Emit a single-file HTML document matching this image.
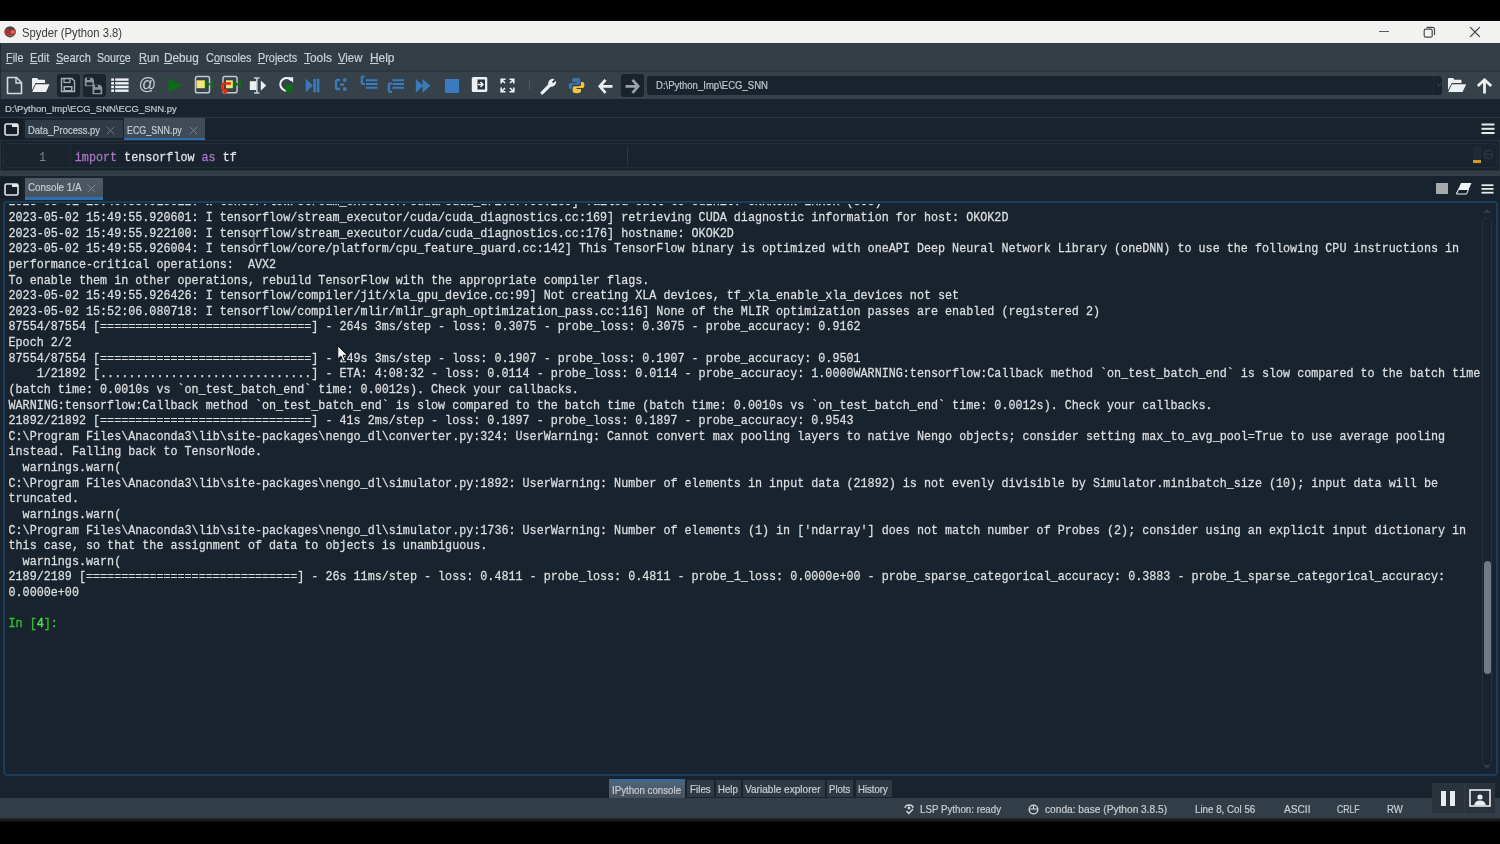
<!DOCTYPE html>
<html><head><meta charset="utf-8"><style>*{margin:0;padding:0;box-sizing:border-box}
html,body{width:1500px;height:844px;overflow:hidden;background:#000}
body{position:relative;font-family:"Liberation Sans",sans-serif}
.a{position:absolute}
.t{position:absolute;white-space:pre;line-height:1;transform-origin:0 0}
.t u{text-decoration:underline;text-underline-offset:1px;text-decoration-thickness:1px}
#title{left:0;top:21px;width:1500px;height:22px;background:#f2f2f1}
#menubar{left:0;top:43px;width:1500px;height:27px;background:#323d46}
#tbsep{left:0;top:70px;width:1500px;height:2px;background:#2b363f}
#toolbar{left:0;top:72px;width:1500px;height:27px;background:#36414a}
#main{left:0;top:99px;width:1500px;height:699px;background:#19232d}
#status{left:0;top:798px;width:1500px;height:20px;background:#323e47}
#stline{left:0;top:818px;width:1500px;height:5px;background:linear-gradient(#2a2a2a,#000)}
#pathline{left:0;top:117px;width:1500px;height:1px;background:#2c3741}
#tab1{left:24.7px;top:120px;width:98px;height:18px;background:#2e3a44}
#tab2{left:124px;top:118px;width:81px;height:22.7px;background:#3f4b56;border-bottom:3px solid #2b6fae}
#edouter{left:0;top:140px;width:1500px;height:31px;background:#19232d;border:1px solid #26313b}
#edinner{left:3px;top:143px;width:1494px;height:25px;border:1px solid #222d37;border-radius:4px;background:#19232d}
#gutter{left:4px;top:144px;width:67px;height:23px;background:#1a242d;border-right:1px solid #1f2a33}
#splitter{left:0;top:171px;width:1500px;height:5.3px;background:#323d46}
#ctab{left:25px;top:178px;width:77.5px;height:21.5px;background:linear-gradient(#4f5963,#46525d);border-bottom:3px solid #2b6fae}
#conpanel{left:2.5px;top:200.8px;width:1495px;height:575.5px;border:2px solid #1a3d5c;border-radius:4px}
#vscroll{left:1482px;top:218px;width:10px;height:548px;border:1px solid #27323c;border-radius:5px}
#vthumb{left:1484px;top:561px;width:7px;height:113px;background:#6f7a82;border-radius:4px}
.btab{position:absolute;top:780.3px;height:16.5px;background:#2d3943}
#btab0{background:linear-gradient(#506476,#44525d);border-top:2.5px solid #2e6aa3;top:778.8px;height:19.2px}
.cl{position:absolute;left:8.5px;font-family:"Liberation Mono",monospace;font-size:11.74px;line-height:15.62px;height:15.62px;color:#dcdee0;white-space:pre;transform:scaleY(1.1);transform-origin:0 50%;-webkit-text-stroke:0.25px #dcdee0}
.prompt{color:#33c233;-webkit-text-stroke:0.3px #33c233}
.prompt b{font-weight:normal;color:#4ae84a;-webkit-text-stroke:0.35px #4ae84a}
#consoleclip{left:5px;top:203.5px;width:1475px;height:570px;overflow:hidden}
</style></head><body><div id="root" style="position:absolute;left:0;top:0;width:1500px;height:844px;overflow:hidden;filter:blur(0.4px)"><div class="a" id="title"></div>
<div class="a" id="menubar"></div>
<div class="a" id="tbsep"></div>
<div class="a" id="toolbar"></div>
<div class="a" id="main"></div>
<div class="a" id="status"></div>
<div class="a" id="stline"></div>
<div class="a" id="pathline"></div>
<div class="a" id="tab1"></div>
<div class="a" id="tab2"></div>
<div class="a" id="edouter"></div>
<div class="a" id="edinner"></div>
<div class="a" id="gutter"></div>
<div class="a" id="splitter"></div>
<div class="a" id="ctab"></div>
<div class="a" id="conpanel"></div>
<div class="a" id="vscroll"></div>
<div class="a" id="vthumb"></div>
<div class="btab" id="btab0" style="left:609px;width:76px"></div>
<div class="btab" style="left:687px;width:26.5px"></div>
<div class="btab" style="left:715.5px;width:25px"></div>
<div class="btab" style="left:742.5px;width:82px"></div>
<div class="btab" style="left:826.7px;width:26.6px"></div>
<div class="btab" style="left:855.5px;width:36.3px"></div>
<!-- title logo -->
<svg class="a" style="left:3.5px;top:25.5px" width="12.5" height="12" viewBox="0 0 12.5 12">
<circle cx="6.1" cy="5.8" r="5.6" fill="#4a4444"/>
<path d="M0.75 4.1 Q3 2.7 6.1 4.5 Q9.2 2.7 11.45 4.1 Q11.9 5.8 11.45 7.9 Q9.2 9.8 6.1 8 Q3 9.8 0.75 7.9 Q0.3 5.8 0.75 4.1Z" fill="#bd3a32"/>
<ellipse cx="8.8" cy="6" rx="1.8" ry="1.4" fill="#dc6f66"/>
<ellipse cx="4" cy="6.2" rx="1.5" ry="1.2" fill="#a82c24"/>
<path d="M3.2 10.2 Q6.1 8.8 9 10.2" stroke="#8c8c8c" stroke-width="0.8" fill="none"/>
</svg>
<!-- window controls -->
<div class="a" style="left:1378.5px;top:31.3px;width:10px;height:1.2px;background:#5a5a5a"></div>
<svg class="a" style="left:1423px;top:26px" width="13" height="13" viewBox="0 0 13 13">
<rect x="1.2" y="3.2" width="8" height="8" rx="1.5" fill="none" stroke="#4a4a4a" stroke-width="1.2"/>
<path d="M3.5 1.3 H9.5 Q11.5 1.3 11.5 3.3 V9" fill="none" stroke="#4a4a4a" stroke-width="1.2"/>
</svg>
<svg class="a" style="left:1469px;top:26px" width="12" height="12" viewBox="0 0 12 12">
<path d="M1.2 1.2 L10.8 10.8 M10.8 1.2 L1.2 10.8" stroke="#3a3a3a" stroke-width="1.2"/>
</svg>

<div class="a" style="left:0;top:43px;width:1px;height:57px;background:#222c35"></div>
<!-- toolbar icons -->
<!-- new file -->
<svg class="a" style="left:6px;top:76px" width="17" height="19" viewBox="0 0 17 19">
<path d="M1.5 1.5 H10.5 L15.5 6.5 V17.5 H1.5 Z" fill="none" stroke="#d4dade" stroke-width="1.6" stroke-linejoin="round"/>
<path d="M10 1.5 V7 H15.5" fill="none" stroke="#d4dade" stroke-width="1.4"/>
</svg>
<!-- open folder -->
<svg class="a" style="left:31px;top:77px" width="19" height="16" viewBox="0 0 19 16">
<path d="M1 2 Q1 1 2 1 H6 L7.5 2.8 H13 Q14 2.8 14 3.8 V6 H4.5 L1 13 Z" fill="#eef1f3"/>
<path d="M4.8 7.2 H18.5 L15 15 H1.2 Z" fill="#eef1f3"/>
</svg>
<!-- save btn -->
<div class="a" style="left:56.5px;top:74px;width:23.5px;height:22.8px;background:#1b252e;border-radius:3px"></div>
<svg class="a" style="left:60px;top:77px" width="16" height="16" viewBox="0 0 16 16">
<path d="M1.5 1.5 H12 L14.5 4 V14.5 H1.5 Z" fill="none" stroke="#a8afb4" stroke-width="1.4"/>
<rect x="4" y="1.5" width="6" height="4" fill="none" stroke="#a8afb4" stroke-width="1.2"/>
<rect x="3.5" y="9" width="9" height="5.5" fill="#a8afb4"/>
<rect x="5" y="10.5" width="6" height="2.5" fill="#1b252e"/>
</svg>
<!-- save all btn -->
<div class="a" style="left:82.5px;top:74px;width:23.5px;height:22.8px;background:#1b252e;border-radius:3px"></div>
<svg class="a" style="left:84px;top:77px" width="19" height="18" viewBox="0 0 19 18">
<path d="M0.8 0.8 H8 L10 2.8 V9.2 H0.8 Z" fill="#8e969c"/>
<rect x="2.5" y="5.3" width="6" height="3" fill="#1b252e"/>
<rect x="3" y="1" width="3" height="2" fill="#1b252e"/>
<path d="M8.5 7.8 H16 L18.2 10 V17.2 H8.5 Z" fill="#8e969c"/>
<rect x="10.3" y="12.8" width="6.2" height="3.2" fill="#1b252e"/>
<rect x="11" y="8.2" width="3" height="2" fill="#1b252e"/>
</svg>
<!-- list -->
<svg class="a" style="left:111px;top:78px" width="18" height="15" viewBox="0 0 18 15">
<g fill="#eef1f3"><rect x="0.2" y="0.4" width="2.8" height="2.4"/><rect x="4.2" y="0.4" width="13.4" height="2.4"/>
<rect x="0.2" y="4.1" width="2.8" height="2.4"/><rect x="4.2" y="4.1" width="13.4" height="2.4"/>
<rect x="0.2" y="7.8" width="2.8" height="2.4"/><rect x="4.2" y="7.8" width="13.4" height="2.4"/>
<rect x="0.2" y="11.5" width="2.8" height="2.4"/><rect x="4.2" y="11.5" width="13.4" height="2.4"/></g>
</svg>
<!-- @ -->
<div class="t" style="left:138.6px;top:76.2px;font-size:17.5px;color:#c9ced2">@</div>
<!-- run -->
<svg class="a" style="left:168px;top:78px" width="15" height="15" viewBox="0 0 15 15">
<path d="M0.5 0.3 L14 7.3 L0.5 14.5 Z" fill="#0b6e12"/>
</svg>
<!-- run cell -->
<svg class="a" style="left:194px;top:75px" width="20" height="19" viewBox="0 0 20 19">
<rect x="1.5" y="1.5" width="14" height="16.2" rx="1.8" fill="none" stroke="#c3c9cd" stroke-width="1.5"/>
<rect x="2.5" y="5.3" width="8.5" height="7.9" fill="#f3e57a"/>
<path d="M10.8 5.3 L16.6 9.2 L10.8 13.3 Z" fill="#0b6e12"/>
<rect x="17" y="5.3" width="2" height="8" fill="#0b6e12"/>
</svg>
<!-- run cell advance -->
<svg class="a" style="left:221px;top:75px" width="21" height="20" viewBox="0 0 21 20">
<rect x="2" y="1.5" width="14" height="16.2" rx="1.8" fill="none" stroke="#c3c9cd" stroke-width="1.5"/>
<rect x="5" y="5.3" width="7" height="7.9" fill="#f3e57a"/>
<path d="M11.8 5.3 L17.6 9.2 L11.8 13.3 Z" fill="#0b6e12"/>
<rect x="18" y="5.3" width="2" height="8" fill="#0b6e12"/>
<path d="M10 8.5 H3.5 Q1.2 8.5 1.2 11.5 Q1.2 15.5 4.5 15.5 H6.5" fill="none" stroke="#e82a10" stroke-width="2.6"/>
<circle cx="4.3" cy="16.5" r="2.2" fill="#e82a10"/>
</svg>
<!-- run selection -->
<svg class="a" style="left:249px;top:77px" width="18" height="17" viewBox="0 0 18 17">
<rect x="0.8" y="4.2" width="6.8" height="8.8" fill="#eef1f3"/>
<path d="M5 1 H10.5 M7.8 1 V16 M5 16 H10.5" stroke="#c9ced2" stroke-width="1.6"/>
<path d="M11.8 3.5 L17.2 8.6 L11.8 13.8 Z" fill="#eef1f3"/>
</svg>
<!-- rerun -->
<svg class="a" style="left:278px;top:76px" width="17" height="18" viewBox="0 0 17 18">
<path d="M13.2 4.2 A6.2 6.2 0 1 0 11.5 13.8" fill="none" stroke="#eef1f3" stroke-width="2.2"/>
<path d="M9.5 1.2 H15.2 V6.8 Z" fill="#eef1f3"/>
<path d="M6.5 10 Q8 7 12 8.5 L15.5 11 Q14 15.5 10 17.2 Q7.2 16 6.5 10Z" fill="#0b6e12"/>
</svg>
<!-- debug -->
<svg class="a" style="left:305px;top:78px" width="16" height="15" viewBox="0 0 16 15">
<path d="M0.7 0.8 L8 7.5 L0.7 14.3 Z" fill="#3a78b8"/>
<rect x="8.3" y="0.8" width="2.6" height="13.5" fill="#3a78b8"/>
<rect x="11.8" y="0.8" width="2.6" height="13.5" fill="#3a78b8"/>
</svg>
<!-- step -->
<svg class="a" style="left:334px;top:77px" width="15" height="15" viewBox="0 0 15 15">
<path d="M6 3 H3.5 Q2 3 2 4.5 V10.5 Q2 12 3.5 12 H6" fill="none" stroke="#3a7bbf" stroke-width="2.3"/>
<circle cx="10.8" cy="3" r="1.9" fill="#3a7bbf"/><circle cx="10.8" cy="12" r="1.9" fill="#3a7bbf"/>
<rect x="6" y="6.5" width="4" height="2.2" fill="#3a7bbf"/>
</svg>
<!-- step into -->
<svg class="a" style="left:360px;top:75px" width="19" height="16" viewBox="0 0 19 16">
<path d="M4.5 1.5 H3 Q1.8 1.5 1.8 2.8 V7.8 Q1.8 9 3 9 H5" fill="none" stroke="#3a7bbf" stroke-width="2.2"/>
<rect x="6" y="4.2" width="11.5" height="2" fill="#3a7bbf"/><rect x="6" y="8" width="11.5" height="2" fill="#3a7bbf"/><rect x="6" y="11.8" width="11.5" height="2" fill="#3a7bbf"/>
</svg>
<!-- step return -->
<svg class="a" style="left:387px;top:78px" width="19" height="16" viewBox="0 0 19 16">
<rect x="5.5" y="1.2" width="11.5" height="2" fill="#3a7bbf"/><rect x="5.5" y="5" width="11.5" height="2" fill="#3a7bbf"/><rect x="5.5" y="8.8" width="11.5" height="2" fill="#3a7bbf"/>
<path d="M5 5.5 H3 Q1.8 5.5 1.8 6.8 V12.5 Q1.8 13.8 3 13.8 H5" fill="none" stroke="#3a7bbf" stroke-width="2.2"/>
</svg>
<!-- continue -->
<svg class="a" style="left:415px;top:78px" width="17" height="16" viewBox="0 0 17 16">
<path d="M0.8 1 L8 7.8 L0.8 14.8 Z M7.5 1 L15.5 7.8 L7.5 14.8 Z" fill="#3a7bbf"/>
</svg>
<!-- stop -->
<div class="a" style="left:444.5px;top:78.5px;width:14px;height:14.5px;background:#3a7bc0"></div>
<!-- maximize pane -->
<svg class="a" style="left:471px;top:76px" width="17" height="17" viewBox="0 0 17 17">
<rect x="0.8" y="1" width="15.5" height="15" rx="1.5" fill="#eef1f3"/>
<rect x="6.5" y="3.5" width="7.5" height="10" fill="#2a343d"/>
<path d="M7 8.5 H11.5 M9.5 6 L12 8.5 L9.5 11" stroke="#eef1f3" stroke-width="1.5" fill="none"/>
</svg>
<!-- fullscreen -->
<svg class="a" style="left:500px;top:78px" width="15" height="15" viewBox="0 0 15 15">
<g stroke="#eef1f3" stroke-width="1.6" fill="none">
<path d="M1.2 5.5 V1.2 H5.5 M1.2 1.2 L5 5"/><path d="M13.8 5.5 V1.2 H9.5 M13.8 1.2 L10 5"/>
<path d="M1.2 9.5 V13.8 H5.5 M1.2 13.8 L5 10"/><path d="M13.8 9.5 V13.8 H9.5 M13.8 13.8 L10 10"/></g>
</svg>
<div class="a" style="left:528.5px;top:80px;width:1.2px;height:10px;background:#4e5963"></div>
<!-- wrench -->
<svg class="a" style="left:540px;top:77px" width="18" height="18" viewBox="0 0 18 18">
<path d="M2.2 15.8 L9.5 8.5" stroke="#eef1f3" stroke-width="3.2" stroke-linecap="round"/>
<path d="M9 9 A4.6 4.6 0 0 1 14.5 2.2 L12 4.8 L13.2 6.2 L15.8 3.8 A4.6 4.6 0 0 1 9 9 Z" fill="#eef1f3"/>
</svg>
<!-- python -->
<svg class="a" style="left:568px;top:77px" width="17" height="17" viewBox="0 0 17 17">
<path d="M8.3 0.8 Q4 0.8 4 3 V5 H8.5 V6 H2.5 Q0.6 6 0.6 9 Q0.6 12 2.5 12 H4 V9.8 Q4 7.8 6 7.8 H10.5 Q12.3 7.8 12.3 6 V3 Q12.3 0.8 8.3 0.8Z" fill="#3b72a8"/>
<path d="M8.7 16.2 Q13 16.2 13 14 V12 H8.5 V11 H14.5 Q16.4 11 16.4 8 Q16.4 5 14.5 5 H13 V7.2 Q13 9.2 11 9.2 H6.5 Q4.7 9.2 4.7 11 V14 Q4.7 16.2 8.7 16.2Z" fill="#f0c63f"/>
</svg>
<!-- back -->
<svg class="a" style="left:598px;top:78px" width="16" height="17" viewBox="0 0 16 17">
<path d="M7.5 1.8 L1.8 8.3 L7.5 14.8 M2.5 8.3 H14.5" stroke="#eef1f3" stroke-width="2.8" fill="none" stroke-linejoin="miter"/>
</svg>
<!-- forward btn -->
<div class="a" style="left:620.7px;top:73.7px;width:23.3px;height:23.6px;background:#1a232c;border-radius:3px"></div>
<svg class="a" style="left:624px;top:78px" width="16" height="17" viewBox="0 0 16 17">
<path d="M8.5 1.8 L14.2 8.3 L8.5 14.8 M13.5 8.3 H1.5" stroke="#9ba1a6" stroke-width="2.8" fill="none"/>
</svg>
<!-- combobox -->
<div class="a" style="left:647.3px;top:76px;width:795px;height:18.7px;background:#19232d;border-radius:3px"></div>
<div class="a" style="left:1433px;top:76px;width:1px;height:18.7px;background:#222c35"></div>
<svg class="a" style="left:1436px;top:83px" width="6" height="4" viewBox="0 0 6 4"><path d="M0.5 0.5 L3 3 L5.5 0.5" stroke="#3b4650" fill="none"/></svg>
<!-- browse folder + up -->
<svg class="a" style="left:1447px;top:77px" width="20" height="16" viewBox="0 0 20 16">
<path d="M1 2 Q1 1 2 1 H6 L7.5 2.8 H13.5 Q14.5 2.8 14.5 3.8 V6 H4.8 L1 13 Z" fill="#eef1f3"/>
<path d="M5 7.2 H19.2 L15.5 15 H1.2 Z" fill="#eef1f3"/>
</svg>
<svg class="a" style="left:1476px;top:78px" width="17" height="16" viewBox="0 0 17 16">
<path d="M1.8 8 L8.5 1.8 L15.2 8 M8.5 2.5 V15.5" stroke="#eef1f3" stroke-width="2.8" fill="none"/>
</svg>
<!-- browse tabs buttons -->
<div class="a" style="left:0;top:118px;width:23px;height:21.5px;background:#151e26;border-radius:2px"></div>
<svg class="a" style="left:3.5px;top:123px" width="15" height="13" viewBox="0 0 15 13">
<rect x="1" y="1" width="13" height="11" rx="1.5" fill="none" stroke="#e3e6e8" stroke-width="1.6"/>
<rect x="8" y="1" width="6" height="3" fill="#e3e6e8"/>
</svg>
<div class="a" style="left:0;top:177px;width:23px;height:22px;background:#151e26;border-radius:2px"></div>
<svg class="a" style="left:3.5px;top:182.5px" width="15" height="13" viewBox="0 0 15 13">
<rect x="1" y="1" width="13" height="11" rx="1.5" fill="none" stroke="#e3e6e8" stroke-width="1.6"/>
<rect x="8" y="1" width="6" height="3" fill="#e3e6e8"/>
</svg>
<!-- tab close x -->
<svg class="a" style="left:106px;top:125.5px" width="9" height="9" viewBox="0 0 9 9"><path d="M0.7 0.7 L8.3 8.3 M8.3 0.7 L0.7 8.3" stroke="#6f7a83" stroke-width="1"/></svg>
<svg class="a" style="left:188.5px;top:125.5px" width="9" height="9" viewBox="0 0 9 9"><path d="M0.7 0.7 L8.3 8.3 M8.3 0.7 L0.7 8.3" stroke="#7a858e" stroke-width="1"/></svg>
<svg class="a" style="left:87px;top:184px" width="9" height="9" viewBox="0 0 9 9"><path d="M0.7 0.7 L8.3 8.3 M8.3 0.7 L0.7 8.3" stroke="#7d8790" stroke-width="1"/></svg>
<!-- hamburgers -->
<svg class="a" style="left:1481px;top:123px" width="14" height="12" viewBox="0 0 14 12"><g fill="#e6e9eb"><rect x="0.5" y="0.5" width="13" height="2"/><rect x="0.5" y="4.8" width="13" height="2"/><rect x="0.5" y="9" width="13" height="2"/></g></svg>
<svg class="a" style="left:1481px;top:184px" width="13" height="10" viewBox="0 0 13 10"><g fill="#e6e9eb"><rect x="0.5" y="0.3" width="12" height="1.8"/><rect x="0.5" y="4" width="12" height="1.8"/><rect x="0.5" y="7.8" width="12" height="1.8"/></g></svg>
<!-- console toolbar -->
<div class="a" style="left:1436px;top:182.5px;width:12px;height:11.5px;background:#a7a9ab"></div>
<svg class="a" style="left:1455px;top:182px" width="18" height="13" viewBox="0 0 18 13">
<path d="M6 1 H16.5 L11.5 12 H1 Z" fill="#f0f2f3"/>
<path d="M3.5 7.5 H13.5 L11.5 12 H1.5 Z" fill="#19232d"/>
<path d="M3.5 7.5 H13.5 L11.5 12 H1.5 Z" fill="none" stroke="#f0f2f3" stroke-width="1"/>
</svg>
<!-- editor -->
<div class="a" style="left:1472.8px;top:146px;width:8.5px;height:17.5px;background:#1f2a34"></div>
<div class="a" style="left:1472.8px;top:160px;width:8.5px;height:3.2px;background:#cc9a22"></div>
<svg class="a" style="left:1483px;top:149px" width="11" height="11" viewBox="0 0 11 11"><circle cx="5.5" cy="5.5" r="4.3" fill="none" stroke="#2c3741" stroke-width="1.2"/><path d="M1.5 5.5 H9.5" stroke="#2c3741"/></svg>
<div class="a" style="left:626.5px;top:146px;width:1px;height:20px;background:#2b3640"></div>
<div class="t" style="left:39px;top:152.9px;font-family:'Liberation Mono',monospace;font-size:11.74px;color:#7c858d;transform:scaleY(1.1);transform-origin:0 50%">1</div>
<div class="t" style="left:74.8px;top:152.9px;font-family:'Liberation Mono',monospace;font-size:11.74px;color:#dfe1e3;transform:scaleY(1.1);transform-origin:0 50%;-webkit-text-stroke:0.25px #dfe1e3"><span style="color:#a877c6;-webkit-text-stroke:0.25px #a877c6">import</span> tensorflow <span style="color:#a877c6;-webkit-text-stroke:0.25px #a877c6">as</span> tf</div>
<!-- scroll arrows -->
<svg class="a" style="left:1482px;top:208px" width="10" height="6" viewBox="0 0 10 6"><path d="M1 5 L5 1 L9 5Z" fill="#2f3a44"/></svg>
<svg class="a" style="left:1482px;top:764px" width="10" height="6" viewBox="0 0 10 6"><path d="M1 1 L5 5 L9 1Z" fill="#2f3a44"/></svg>
<!-- status icons -->
<svg class="a" style="left:903px;top:804px" width="12" height="11" viewBox="0 0 12 11">
<path d="M2 4 Q2 1 6 1 Q10 1 10 4" fill="none" stroke="#d8dcdf" stroke-width="1.3"/><circle cx="6" cy="4" r="1.4" fill="#d8dcdf"/>
<path d="M3.5 7 L5.8 9.5 L10 5" fill="none" stroke="#d8dcdf" stroke-width="1.4"/>
</svg>
<svg class="a" style="left:1028px;top:804px" width="11" height="11" viewBox="0 0 11 11">
<circle cx="5.5" cy="5.5" r="4.3" fill="none" stroke="#d8dcdf" stroke-width="1.3"/><path d="M1.5 5 H9.5 M5.5 1.5 V5" stroke="#d8dcdf" stroke-width="1.1"/>
</svg>
<!-- pause / screen -->
<div class="a" style="left:1432.3px;top:782.7px;width:62.7px;height:30px;background:#2a333c"></div>
<div class="a" style="left:1463.5px;top:782.7px;width:1px;height:30px;background:#323b44"></div>
<div class="a" style="left:1441px;top:790.5px;width:5px;height:15.5px;background:#e9ecee"></div>
<div class="a" style="left:1450px;top:790.5px;width:5px;height:15.5px;background:#e9ecee"></div>
<svg class="a" style="left:1469px;top:789px" width="22" height="18" viewBox="0 0 22 18">
<rect x="1" y="1" width="20" height="16" fill="none" stroke="#e9ecee" stroke-width="1.6"/>
<circle cx="11" cy="8" r="2.6" fill="#e9ecee"/><path d="M5 16.5 Q6 11.5 11 11.5 Q16 11.5 17 16.5Z" fill="#e9ecee"/>
</svg>

<div class="t" style="left:22.10px;top:26.69px;font-size:12.06px;color:#3a3a3a;transform:scaleX(0.9344)">Spyder (Python 3.8)</div>
<div class="t" style="left:5.60px;top:53.21px;font-size:11.92px;color:#c9d0d6;transform:scaleX(0.9099);-webkit-text-stroke:0.2px #c9d0d6"><u>F</u>ile</div>
<div class="t" style="left:29.90px;top:53.21px;font-size:11.92px;color:#c9d0d6;transform:scaleX(0.9383);-webkit-text-stroke:0.2px #c9d0d6"><u>E</u>dit</div>
<div class="t" style="left:56.30px;top:53.21px;font-size:11.92px;color:#c9d0d6;transform:scaleX(0.9245);-webkit-text-stroke:0.2px #c9d0d6"><u>S</u>earch</div>
<div class="t" style="left:97.20px;top:53.21px;font-size:11.92px;color:#c9d0d6;transform:scaleX(0.8949);-webkit-text-stroke:0.2px #c9d0d6">Sour<u>c</u>e</div>
<div class="t" style="left:138.60px;top:53.21px;font-size:11.92px;color:#c9d0d6;transform:scaleX(0.9237);-webkit-text-stroke:0.2px #c9d0d6"><u>R</u>un</div>
<div class="t" style="left:164.40px;top:53.21px;font-size:11.92px;color:#c9d0d6;transform:scaleX(0.9895);-webkit-text-stroke:0.2px #c9d0d6"><u>D</u>ebug</div>
<div class="t" style="left:205.70px;top:53.21px;font-size:11.92px;color:#c9d0d6;transform:scaleX(0.9158);-webkit-text-stroke:0.2px #c9d0d6">C<u>o</u>nsoles</div>
<div class="t" style="left:258.40px;top:53.21px;font-size:11.92px;color:#c9d0d6;transform:scaleX(0.9104);-webkit-text-stroke:0.2px #c9d0d6"><u>P</u>rojects</div>
<div class="t" style="left:303.80px;top:53.21px;font-size:11.92px;color:#c9d0d6;transform:scaleX(1.0021);-webkit-text-stroke:0.2px #c9d0d6"><u>T</u>ools</div>
<div class="t" style="left:338.00px;top:53.21px;font-size:11.92px;color:#c9d0d6;transform:scaleX(0.9503);-webkit-text-stroke:0.2px #c9d0d6"><u>V</u>iew</div>
<div class="t" style="left:370.00px;top:53.21px;font-size:11.92px;color:#c9d0d6;transform:scaleX(0.9974);-webkit-text-stroke:0.2px #c9d0d6"><u>H</u>elp</div>
<div class="t" style="left:655.50px;top:79.65px;font-size:11.05px;color:#c3c8cc;transform:scaleX(0.8644);-webkit-text-stroke:0.2px #c3c8cc">D:\Python_Imp\ECG_SNN</div>
<div class="t" style="left:4.70px;top:104.30px;font-size:9.45px;color:#c3c8cc;transform:scaleX(1.0012);-webkit-text-stroke:0.2px #c3c8cc">D:\Python_Imp\ECG_SNN\ECG_SNN.py</div>
<div class="t" style="left:28.00px;top:125.02px;font-size:10.61px;color:#c7ccd1;transform:scaleX(0.8922);-webkit-text-stroke:0.2px #c7ccd1">Data_Process.py</div>
<div class="t" style="left:127.30px;top:125.02px;font-size:10.61px;color:#c7ccd1;transform:scaleX(0.8376);-webkit-text-stroke:0.2px #c7ccd1">ECG_SNN.py</div>
<div class="t" style="left:28.00px;top:182.94px;font-size:10.47px;color:#c7ccd1;transform:scaleX(0.9395);-webkit-text-stroke:0.2px #c7ccd1">Console 1/A</div>
<div class="t" style="left:612.40px;top:786.06px;font-size:10.32px;color:#c9cdd0;transform:scaleX(0.9410);-webkit-text-stroke:0.2px #c9cdd0">IPython console</div>
<div class="t" style="left:689.80px;top:784.69px;font-size:10.17px;color:#c9cdd0;transform:scaleX(0.9689);-webkit-text-stroke:0.2px #c9cdd0">Files</div>
<div class="t" style="left:717.50px;top:784.69px;font-size:10.17px;color:#c9cdd0;transform:scaleX(0.9464);-webkit-text-stroke:0.2px #c9cdd0">Help</div>
<div class="t" style="left:745.20px;top:784.69px;font-size:10.17px;color:#c9cdd0;transform:scaleX(0.9930);-webkit-text-stroke:0.2px #c9cdd0">Variable explorer</div>
<div class="t" style="left:829.40px;top:784.69px;font-size:10.17px;color:#c9cdd0;transform:scaleX(0.9422);-webkit-text-stroke:0.2px #c9cdd0">Plots</div>
<div class="t" style="left:858.20px;top:784.69px;font-size:10.17px;color:#c9cdd0;transform:scaleX(0.9440);-webkit-text-stroke:0.2px #c9cdd0">History</div>
<div class="t" style="left:920.00px;top:805.36px;font-size:10.32px;color:#c9cdd0;transform:scaleX(0.9443);-webkit-text-stroke:0.2px #c9cdd0">LSP Python: ready</div>
<div class="t" style="left:1045.00px;top:805.36px;font-size:10.32px;color:#c9cdd0;transform:scaleX(0.9863);-webkit-text-stroke:0.2px #c9cdd0">conda: base (Python 3.8.5)</div>
<div class="t" style="left:1194.70px;top:805.36px;font-size:10.32px;color:#c9cdd0;transform:scaleX(0.9468);-webkit-text-stroke:0.2px #c9cdd0">Line 8, Col 56</div>
<div class="t" style="left:1283.70px;top:805.36px;font-size:10.32px;color:#c9cdd0;transform:scaleX(0.9820);-webkit-text-stroke:0.2px #c9cdd0">ASCII</div>
<div class="t" style="left:1336.80px;top:805.36px;font-size:10.32px;color:#c9cdd0;transform:scaleX(0.8412);-webkit-text-stroke:0.2px #c9cdd0">CRLF</div>
<div class="t" style="left:1387.20px;top:805.36px;font-size:10.32px;color:#c9cdd0;transform:scaleX(0.9269);-webkit-text-stroke:0.2px #c9cdd0">RW</div>
<div class="a" id="consoleclip">
<div class="a" style="left:-5px;top:-203.5px;width:1500px;height:844px">
<div class="cl" style="top:195.48px">2023-05-02 15:49:55.915012: W tensorflow/stream_executor/cuda/cuda_driver.cc:269] failed call to cuInit: UNKNOWN ERROR (303)</div>
<div class="cl" style="top:211.10px">2023-05-02 15:49:55.920601: I tensorflow/stream_executor/cuda/cuda_diagnostics.cc:169] retrieving CUDA diagnostic information for host: OKOK2D</div>
<div class="cl" style="top:226.72px">2023-05-02 15:49:55.922100: I tensorflow/stream_executor/cuda/cuda_diagnostics.cc:176] hostname: OKOK2D</div>
<div class="cl" style="top:242.34px">2023-05-02 15:49:55.926004: I tensorflow/core/platform/cpu_feature_guard.cc:142] This TensorFlow binary is optimized with oneAPI Deep Neural Network Library (oneDNN) to use the following CPU instructions in</div>
<div class="cl" style="top:257.96px">performance-critical operations:  AVX2</div>
<div class="cl" style="top:273.58px">To enable them in other operations, rebuild TensorFlow with the appropriate compiler flags.</div>
<div class="cl" style="top:289.20px">2023-05-02 15:49:55.926426: I tensorflow/compiler/jit/xla_gpu_device.cc:99] Not creating XLA devices, tf_xla_enable_xla_devices not set</div>
<div class="cl" style="top:304.82px">2023-05-02 15:52:06.080718: I tensorflow/compiler/mlir/mlir_graph_optimization_pass.cc:116] None of the MLIR optimization passes are enabled (registered 2)</div>
<div class="cl" style="top:320.44px">87554/87554 [==============================] - 264s 3ms/step - loss: 0.3075 - probe_loss: 0.3075 - probe_accuracy: 0.9162</div>
<div class="cl" style="top:336.06px">Epoch 2/2</div>
<div class="cl" style="top:351.68px">87554/87554 [==============================] - 249s 3ms/step - loss: 0.1907 - probe_loss: 0.1907 - probe_accuracy: 0.9501</div>
<div class="cl" style="top:367.30px">    1/21892 [..............................] - ETA: 4:08:32 - loss: 0.0114 - probe_loss: 0.0114 - probe_accuracy: 1.0000WARNING:tensorflow:Callback method `on_test_batch_end` is slow compared to the batch time</div>
<div class="cl" style="top:382.92px">(batch time: 0.0010s vs `on_test_batch_end` time: 0.0012s). Check your callbacks.</div>
<div class="cl" style="top:398.54px">WARNING:tensorflow:Callback method `on_test_batch_end` is slow compared to the batch time (batch time: 0.0010s vs `on_test_batch_end` time: 0.0012s). Check your callbacks.</div>
<div class="cl" style="top:414.16px">21892/21892 [==============================] - 41s 2ms/step - loss: 0.1897 - probe_loss: 0.1897 - probe_accuracy: 0.9543</div>
<div class="cl" style="top:429.78px">C:\Program Files\Anaconda3\lib\site-packages\nengo_dl\converter.py:324: UserWarning: Cannot convert max pooling layers to native Nengo objects; consider setting max_to_avg_pool=True to use average pooling</div>
<div class="cl" style="top:445.40px">instead. Falling back to TensorNode.</div>
<div class="cl" style="top:461.02px">  warnings.warn(</div>
<div class="cl" style="top:476.64px">C:\Program Files\Anaconda3\lib\site-packages\nengo_dl\simulator.py:1892: UserWarning: Number of elements in input data (21892) is not evenly divisible by Simulator.minibatch_size (10); input data will be</div>
<div class="cl" style="top:492.26px">truncated.</div>
<div class="cl" style="top:507.88px">  warnings.warn(</div>
<div class="cl" style="top:523.50px">C:\Program Files\Anaconda3\lib\site-packages\nengo_dl\simulator.py:1736: UserWarning: Number of elements (1) in [&#x27;ndarray&#x27;] does not match number of Probes (2); consider using an explicit input dictionary in</div>
<div class="cl" style="top:539.12px">this case, so that the assignment of data to objects is unambiguous.</div>
<div class="cl" style="top:554.74px">  warnings.warn(</div>
<div class="cl" style="top:570.36px">2189/2189 [==============================] - 26s 11ms/step - loss: 0.4811 - probe_loss: 0.4811 - probe_1_loss: 0.0000e+00 - probe_sparse_categorical_accuracy: 0.3883 - probe_1_sparse_categorical_accuracy:</div>
<div class="cl" style="top:585.98px">0.0000e+00</div>
<div class="cl prompt" style="top:617.22px">In [<b>4</b>]: </div>
</div></div>
<!-- mouse cursor -->
<svg class="a" style="left:336.5px;top:345px" width="12" height="18" viewBox="0 0 12 18">
<path d="M0.8 0.8 L0.8 13.8 L3.9 11 L6.2 16.3 L8.3 15.4 L6.1 10.3 L10.4 10.3 Z" fill="#f6f6f6" stroke="#0d0d0d" stroke-width="0.9" stroke-linejoin="round"/>
</svg>
<!-- text I-beam cursor -->
<svg class="a" style="left:251px;top:233px" width="6" height="12" viewBox="0 0 6 12"><path d="M0.8 0.6 H5.2 M3 0.6 V11.4 M0.8 11.4 H5.2" stroke="#9aa0a4" stroke-width="0.9" fill="none"/></svg>

</div></body></html>
